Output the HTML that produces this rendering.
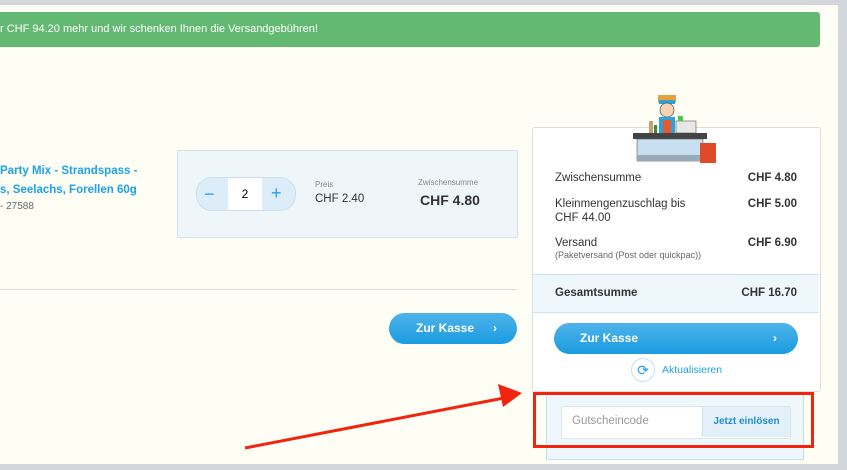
<!DOCTYPE html>
<html><head><meta charset="utf-8"><style>
body{margin:0;width:847px;height:470px;background:#d3d6dd;position:relative;overflow:hidden;font-family:"Liberation Sans",sans-serif}
.page{position:absolute;left:0;top:5px;width:838px;height:459px;background:#fffef4}
.a{position:absolute}
.banner{left:0;top:7px;width:820px;height:35px;background:#63b972;border-radius:0 3px 3px 0;color:#fff;font-size:11px;line-height:35px}
.blue{color:#1ea1e6}
.btn{background:linear-gradient(#4fb3ea,#1a9ce0);border-radius:16px;color:#fff;font-weight:bold;font-size:12px}
</style></head><body>
<div class="page">
<div class="a banner">r CHF 94.20 mehr und wir schenken Ihnen die Versandgebühren!</div>
<div class="a blue" style="left:0;top:157px;font-size:11.5px;font-weight:bold;line-height:19px">Party Mix - Strandspass -<br>s, Seelachs, Forellen 60g</div>
<div class="a" style="left:0;top:196px;font-size:10px;color:#666">- 27588</div>
<div class="a" style="left:177px;top:145px;width:339px;height:86px;background:#eef6fa;border:1px solid #cfe3ee;border-radius:2px"></div>
<div class="a" style="left:196px;top:172px;width:98px;height:32px;background:#dcedf9;border:1px solid #cbe0ee;border-radius:16px"></div>
<div class="a" style="left:228px;top:173px;width:34px;height:32px;background:#fff;text-align:center;line-height:32px;font-size:12px">2</div>
<div class="a blue" style="left:204px;top:179px;font-size:18px">−</div>
<div class="a blue" style="left:271px;top:178px;font-size:18px">+</div>
<div class="a" style="left:315px;top:175px;font-size:8px;color:#888">Preis</div>
<div class="a" style="left:315px;top:188px;font-size:11.5px;color:#333">CHF 2.40</div>
<div class="a" style="left:418px;top:173px;font-size:8px;color:#888">Zwischensumme</div>
<div class="a" style="left:420px;top:187px;font-size:14px;font-weight:bold;color:#333">CHF 4.80</div>
<div class="a" style="left:0;top:284px;width:517px;height:1px;background:#ddd"></div>
<div class="a btn" style="left:389px;top:308px;width:128px;height:31px;line-height:31px"><span style="margin-left:27px">Zur Kasse</span><span style="position:absolute;right:20px">›</span></div>
<div class="a" style="left:532px;top:122px;width:287px;height:263px;background:#fff;border:1px solid #ddd;border-radius:3px"></div>
<svg class="a" style="left:632px;top:84px" width="90" height="80">
<rect x="26" y="6" width="18" height="8" fill="#e8a13a"/><rect x="27" y="11" width="16" height="4" fill="#2aa2dd"/>
<circle cx="35" cy="21" r="7" fill="#f6d2b3" stroke="#333" stroke-width=".6"/>
<rect x="27" y="28" width="16" height="18" fill="#2aa2dd"/><rect x="31" y="31" width="8" height="14" fill="#e85a2e"/>
<rect x="17" y="32" width="4" height="14" fill="#c8a070"/><rect x="22" y="36" width="3" height="10" fill="#3a8c3a"/>
<rect x="44" y="32" width="20" height="12" fill="#e8e8e8" stroke="#555" stroke-width=".6"/><rect x="46" y="27" width="5" height="5" fill="#4c4"/>
<rect x="1" y="44" width="74" height="6" fill="#444"/>
<rect x="5" y="50" width="66" height="22" fill="#c8dff0" stroke="#555" stroke-width=".6"/><rect x="5" y="66" width="66" height="6" fill="#9aaab8"/>
<rect x="68" y="54" width="16" height="20" fill="#e04a2a"/>
</svg>
<div class="a" style="left:555px;top:167px;font-size:11.5px;color:#333;width:242px">Zwischensumme<span style="float:right;font-weight:bold">CHF 4.80</span></div>
<div class="a" style="left:555px;top:192px;font-size:11.5px;color:#333;width:242px;line-height:14px"><span style="float:right;font-weight:bold">CHF 5.00</span>Kleinmengenzuschlag bis<br>CHF 44.00</div>
<div class="a" style="left:555px;top:232px;font-size:11.5px;color:#333;width:242px"><span style="float:right;font-weight:bold">CHF 6.90</span>Versand<br><span style="font-size:9px;color:#666">(Paketversand (Post oder quickpac))</span></div>
<div class="a" style="left:533px;top:269px;width:286px;height:37px;background:#eef7fb;border-top:1px solid #cfe3ee;border-bottom:1px solid #cfe3ee"></div>
<div class="a" style="left:555px;top:282px;font-size:11.5px;font-weight:bold;color:#333;width:242px">Gesamtsumme<span style="float:right">CHF 16.70</span></div>
<div class="a btn" style="left:554px;top:318px;width:244px;height:31px;line-height:31px"><span style="margin-left:26px">Zur Kasse</span><span style="position:absolute;right:21px">›</span></div>
<div class="a" style="left:631px;top:353px;width:22px;height:22px;border:1px solid #bfe0f4;border-radius:50%;text-align:center;line-height:22px;color:#1ea1e6;font-size:14px">⟳</div>
<div class="a blue" style="left:662px;top:359px;font-size:10.5px">Aktualisieren</div>
<div class="a" style="left:546px;top:387px;width:256px;height:67px;background:#eef7fb;border:1px solid #bfe0f4;border-top:none"></div>
<div class="a" style="left:561px;top:401px;width:228px;height:31px;background:#fff;border:1px solid #d8e6ee;border-radius:2px"></div>
<div class="a" style="left:572px;top:410px;font-size:11.5px;color:#999">Gutscheincode</div>
<div class="a" style="left:702px;top:402px;width:87px;height:30px;background:#e3f0fa;border-left:1px solid #cfe3ee;text-align:center;line-height:30px;font-size:10px;font-weight:bold;color:#1e8fd0">Jetzt einlösen</div>
<div class="a" style="left:533px;top:387px;width:275px;height:50px;border:3px solid #f2230f"></div>
<svg class="a" style="left:0;top:0" width="838" height="459"><line x1="245" y1="443" x2="504" y2="393" stroke="#f2230f" stroke-width="3"/><polygon points="522,388 498,379 503,402" fill="#f2230f"/></svg>
</div>
</body></html>
